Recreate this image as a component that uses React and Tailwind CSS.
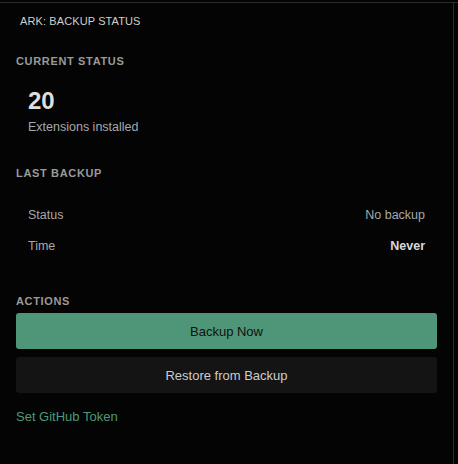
// App.jsx — backup status side panel
import React from "react";

function SectionTitle({ children, className = "" }) {
  return (
    <h2
      className={`text-[11px] font-bold uppercase tracking-[0.06em] text-[#9a9a9a] ${className}`}
    >
      {children}
    </h2>
  );
}

function Row({ label, value, strong }) {
  return (
    <div className="flex items-center justify-between h-[31px] text-[12.5px]">
      <span className="text-[#a8a8a8]">{label}</span>
      <span className={strong ? "font-bold text-[#d8d8d8]" : "text-[#a8a8a8]"}>
        {value}
      </span>
    </div>
  );
}

export default function App() {
  return (
    <div
      className="w-[458px] h-[464px] bg-[#040404] overflow-hidden"
      style={{ fontFamily: '"Liberation Sans", Arial, sans-serif' }}
    >
      <div className="h-[2px]" />
      <div className="h-[1px] bg-[#2c2c2c]" />
      <div className="flex h-[461px]">
        <div className="w-[453px] flex flex-col">
          {/* Header */}
          <div className="pl-[20px] pt-[10px] h-[36px] text-[11px] font-medium uppercase text-[#cfcfcf] tracking-[0.01em]">
            Ark: Backup Status
          </div>

          <div className="px-[16px]">
            {/* Current status */}
            <SectionTitle className="mt-[14px]">Current Status</SectionTitle>
            <div className="pl-[12px] mt-[17px]">
              <div className="text-[24px] font-bold leading-[28px] text-[#dedede]">
                20
              </div>
              <div className="text-[12.5px] text-[#a8a8a8] mt-[3px]">
                Extensions installed
              </div>
            </div>

            {/* Last backup */}
            <SectionTitle className="mt-[29px]">Last Backup</SectionTitle>
            <div className="pl-[12px] pr-[12px] mt-[18px]">
              <Row label="Status" value="No backup" />
              <Row label="Time" value="Never" strong />
            </div>

            {/* Actions */}
            <SectionTitle className="mt-[31px]">Actions</SectionTitle>
            <div className="mt-[4px] w-[421px] flex flex-col gap-[8px]">
              <button className="h-[36px] rounded-[3px] bg-[#4e9677] text-[13px] text-[#111]">
                Backup Now
              </button>
              <button className="h-[36px] rounded-[3px] bg-[#141414] text-[13px] text-[#cccccc]">
                Restore from Backup
              </button>
            </div>
            <a className="block mt-[14px] text-[13px] text-[#4c9a78]" href="#">
              Set GitHub Token
            </a>
          </div>
        </div>
        <div className="w-[1px] bg-[#2c2c2c]" />
      </div>
    </div>
  );
}
